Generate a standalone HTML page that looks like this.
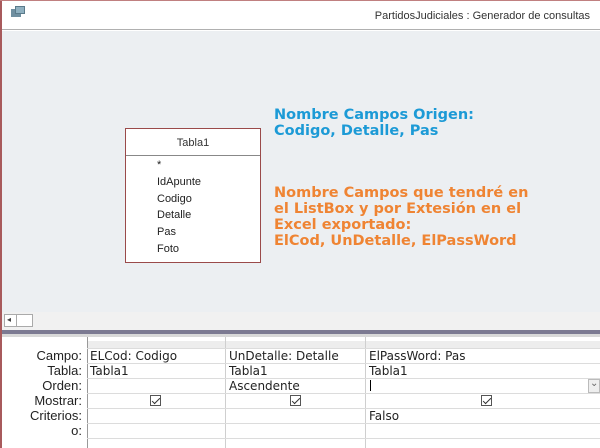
<!DOCTYPE html>
<html><head><meta charset="utf-8"><style>
*{margin:0;padding:0;box-sizing:border-box}
body{width:600px;height:448px;overflow:hidden;background:#fff;position:relative;font-family:"DejaVu Sans",Verdana,sans-serif}
.a{position:absolute}
.t{font-family:"Liberation Sans",Arial,sans-serif}
.lbl{position:absolute;right:518px;font-size:13px;color:#222;text-align:right;white-space:nowrap}
.cell{position:absolute;font-size:12px;color:#222;white-space:nowrap}
.hl{position:absolute;left:87px;right:0;height:1px;background:#dcdcdc}
.vl{position:absolute;top:337px;bottom:0;width:1px;background:#cfcfcf}
.cb{position:absolute;width:11px;height:11px;border:1px solid #555;background:#fff}
.cb:after{content:"";position:absolute;left:3px;top:0px;width:3px;height:7px;border:solid #333;border-width:0 1px 1px 0;transform:rotate(45deg)}
.f{position:absolute;left:157px;font-size:11px;color:#222}
</style></head><body>
<div class="a" style="left:0;top:0;width:600px;height:30px;background:#fff;border-bottom:1px solid #b0b0b0"></div>
<div class="a" style="left:11px;top:9px;width:10px;height:8px;background:#6f8fa0"></div>
<div class="a" style="left:15px;top:6px;width:10px;height:8px;background:#8fb0c0;border:1px solid #5a7a8a"></div>
<div class="a t" style="right:10px;top:10px;font-size:11px;color:#333">PartidosJudiciales : Generador de consultas</div>
<div class="a" style="left:0;top:31px;width:600px;height:281px;background:#eceff2"></div>
<div class="a" style="left:0;top:312px;width:600px;height:18px;background:#f1f1f1"></div>
<div class="a" style="left:4px;top:314px;width:29px;height:13px;background:#fff;border:1px solid #aaa"></div>
<div class="a" style="left:16px;top:314px;width:1px;height:13px;background:#aaa"></div>
<div class="a t" style="left:7px;top:315px;font-size:8px;color:#444">◂</div>
<div class="a" style="left:0;top:330px;width:600px;height:4px;background:#7c7a92"></div>
<div class="a" style="left:0;top:334px;width:600px;height:3px;background:#d8d8d8"></div>
<div class="a" style="left:0;top:0;width:2px;height:448px;background:#a85a5c"></div>
<div class="a" style="left:0;top:0;width:600px;height:1px;background:#c08080"></div>

<div class="a" style="left:125px;top:128px;width:136px;height:135px;background:#fff;border:1px solid #9a4a4a"></div>
<div class="a" style="left:126px;top:155px;width:134px;height:1px;background:#888"></div>
<div class="a t" style="left:126px;top:137px;width:134px;text-align:center;font-size:11px;color:#333">Tabla1</div>
<div class="f t" style="top:159px">*</div>
<div class="f t" style="top:176px">IdApunte</div>
<div class="f t" style="top:193px">Codigo</div>
<div class="f t" style="top:209px">Detalle</div>
<div class="f t" style="top:226px">Pas</div>
<div class="f t" style="top:243px">Foto</div>

<div class="a" style="left:274px;top:107px;font-size:14.5px;font-weight:bold;line-height:16px;color:#1c9ad6;white-space:nowrap">Nombre Campos Origen:<br>Codigo, Detalle, Pas</div>
<div class="a" style="left:274px;top:185px;font-size:14.5px;font-weight:bold;line-height:16px;color:#ef8433;white-space:nowrap">Nombre Campos que tendré en<br>el ListBox y por Extesión en el<br>Excel exportado:<br>ElCod, UnDetalle, ElPassWord</div>

<div class="a" style="left:87px;top:341px;width:513px;height:7px;background:#ededed"></div>
<div class="vl" style="left:87px;background:#999"></div>
<div class="vl" style="left:225px"></div>
<div class="vl" style="left:365px"></div>
<div class="hl" style="top:348px"></div>
<div class="hl" style="top:363px"></div>
<div class="hl" style="top:378px"></div>
<div class="hl" style="top:393px"></div>
<div class="hl" style="top:408px"></div>
<div class="hl" style="top:423px"></div>
<div class="hl" style="top:438px"></div>
<div class="lbl t" style="top:348px">Campo:</div>
<div class="lbl t" style="top:363px">Tabla:</div>
<div class="lbl t" style="top:378px">Orden:</div>
<div class="lbl t" style="top:393px">Mostrar:</div>
<div class="lbl t" style="top:408px">Criterios:</div>
<div class="lbl t" style="top:423px">o:</div>
<div class="cell" style="left:90px;top:349px">ELCod: Codigo</div>
<div class="cell" style="left:229px;top:349px">UnDetalle: Detalle</div>
<div class="cell" style="left:369px;top:349px">ElPassWord: Pas</div>
<div class="cell" style="left:90px;top:364px">Tabla1</div>
<div class="cell" style="left:229px;top:364px">Tabla1</div>
<div class="cell" style="left:369px;top:364px">Tabla1</div>
<div class="cell" style="left:229px;top:379px">Ascendente</div>
<div class="a" style="left:370px;top:380px;width:1px;height:11px;background:#000"></div>
<div class="a" style="left:588px;top:379px;width:12px;height:14px;background:#eee;border:1px solid #bbb"></div>
<div class="a t" style="left:590px;top:378px;font-size:10px;color:#666">⌄</div>
<div class="cb" style="left:150px;top:395px"></div>
<div class="cb" style="left:290px;top:395px"></div>
<div class="cb" style="left:481px;top:395px"></div>
<div class="cell" style="left:369px;top:409px">Falso</div>
</body></html>
